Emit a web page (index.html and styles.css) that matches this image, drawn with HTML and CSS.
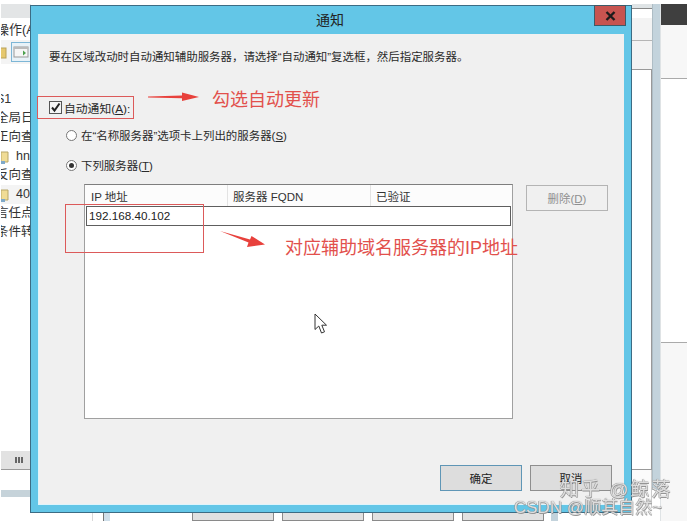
FILE: index.html
```html
<!DOCTYPE html>
<html lang="zh-CN">
<head>
<meta charset="utf-8">
<title>通知</title>
<link rel="stylesheet" href="styles.css">
</head>
<body>
<div class="desktop">
  <div class="bg-left">
    <div class="bg-band"></div>
    <div class="bg-menu">操作(A</div>
    <div class="bg-tools">
      <svg class="bg-folder-top" width="7" height="13" viewBox="0 0 7 13"><rect x="0" y="2" width="6" height="10" fill="#e6c86e" stroke="#b9a15a"/></svg>
      <svg class="bg-tool" width="20" height="20" viewBox="0 0 20 20"><rect x="0.5" y="0.5" width="19" height="19" fill="#e8f2f8" stroke="#7db6d6"/><rect x="3" y="5" width="14" height="10" fill="#f6f6f6" stroke="#999"/><rect x="3" y="5" width="14" height="2" fill="#bbb"/><path d="M12 8.500l3 2.500-3 2.500z" fill="#4da04d"/></svg>
    </div>
    <div class="bg-tree">
      <div class="bg-row bg-first">S1</div>
      <div class="bg-row">全局日</div>
      <div class="bg-row">正向查</div>
      <div class="bg-row bg-file"><svg width="8" height="14" viewBox="0 0 8 14"><path d="M0 2h7v10H0z" fill="#f0dc96" stroke="#b7a668"/><path d="M0 11h4v3H0z" fill="#7fa9c9"/></svg><span>hn</span></div>
      <div class="bg-row">反向查</div>
      <div class="bg-row bg-file bg-sel"><svg width="8" height="14" viewBox="0 0 8 14"><path d="M0 2h7v10H0z" fill="#f0dc96" stroke="#b7a668"/><path d="M0 11h4v3H0z" fill="#7fa9c9"/></svg><span>40</span></div>
      <div class="bg-row">言任点</div>
      <div class="bg-row">条件转</div>
    </div>
    <div class="bg-scroll"><span class="bg-grip"></span></div>
    <div class="bg-strip"></div>
  </div>

  <div class="bg-bottom">
    <span class="bg-divider"></span>
    <span class="bg-tab"></span>
    <span class="bg-btn"></span>
    <span class="bg-btn"></span>
    <span class="bg-btn"></span>
    <span class="bg-btn"></span>
    <span class="bg-blue"></span>
  </div>

  <div class="bg-right">
    <div class="bg-pane">
      <div class="bg-pane-top"></div>
      <div class="bg-pane-mid"></div>
      <div class="bg-pane-list"></div>
      <div class="bg-pane-foot"></div>
    </div>
    <div class="bg-sep"></div>
    <div class="bg-side">
      <div class="bg-side-dark"></div>
      <div class="bg-side-light"></div>
      <div class="bg-side-white"></div>
      <div class="bg-side-rest"></div>
    </div>
  </div>

  <div class="dialog">
    <div class="titlebar">
      <span class="title">通知</span>
      <span class="close">
        <svg width="11" height="10" viewBox="0 0 11 10"><path d="M1.500 1l8 8M9.500 1l-8 8" stroke="#1c1c1c" stroke-width="2.400" fill="none"/></svg>
      </span>
    </div>
    <div class="client">
      <p class="desc">要在区域改动时自动通知辅助服务器，请选择“自动通知”复选框，然后指定服务器。</p>
      <label class="check-row">
        <span class="checkbox"><svg width="11" height="11" viewBox="0 0 11 11"><path d="M2 5.500l2.500 3L9.500 1.500" stroke="#222" stroke-width="2" fill="none"/></svg></span>
        <span>自动通知(<u>A</u>):</span>
      </label>
      <label class="radio-row radio-first">
        <span class="radio"></span>
        <span>在“名称服务器”选项卡上列出的服务器(<u>S</u>)</span>
      </label>
      <label class="radio-row radio-second">
        <span class="radio radio-on"></span>
        <span>下列服务器(<u>T</u>)</span>
      </label>
      <div class="list-row">
        <div class="table">
          <div class="thead">
            <span class="th th-ip">IP 地址</span>
            <span class="th th-fqdn">服务器 FQDN</span>
            <span class="th th-ok">已验证</span>
          </div>
          <div class="edit-row">192.168.40.102</div>
        </div>
        <button class="btn btn-disabled" type="button">删除(<u>D</u>)</button>
      </div>
      <div class="footer">
        <button class="btn btn-default" type="button">确定</button>
        <button class="btn" type="button">取消</button>
      </div>
    </div>
  </div>

  <div class="mark mark-box1"></div>
  <div class="mark mark-box2"></div>
  <svg class="mark arrow1" width="52" height="12" viewBox="0 0 52 12"><path d="M0 5.500L34 4.500V1.500L51 6 34 10V7.200L0 6.500z" fill="#e8413c"/></svg>
  <svg class="mark arrow2" width="46" height="18" viewBox="0 0 46 18"><path d="M0 0L30 8.500 31.500 5 45 13.500 27 16 28.500 11.500z" fill="#e8413c"/></svg>
  <span class="mark note note1">勾选自动更新</span>
  <span class="mark note note2">对应辅助域名服务器的IP地址</span>
  <svg class="mark cursor" width="14" height="22" viewBox="0 0 14 22"><path d="M1 1V16.500L4.800 13 7.500 20 10.500 18.800 7.800 12.200H12.500z" fill="#fff" stroke="#333" stroke-width="1"/></svg>
  <span class="mark wm wm1">知乎 @鲸落</span>
  <span class="mark wm wm2">CSDN @顺其自然~</span>
</div>
</body>
</html>
```

FILE: styles.css
```css
* { box-sizing: border-box; }
html, body { margin: 0; padding: 0; background: #fff; }
body { width: 687px; height: 528px; overflow: hidden; font-family: "Liberation Sans", "Noto Sans CJK SC", sans-serif; font-size: 11.450px; color: #2a2a2a; }
.desktop { position: relative; width: 687px; height: 528px; filter: blur(0.4px); }

/* window behind the dialog */
.bg-left { position: absolute; left: 1px; top: 4px; width: 30px; height: 517px; display: flex; flex-direction: column; overflow: hidden; background: #fff; }
.bg-band { height: 14px; background: #e3e5e6; }
.bg-menu { height: 22px; line-height: 24px; margin-left: -5px; font-size: 13px; white-space: nowrap; color: #333; }
.bg-tools { height: 24px; background: #f4f4f4; display: flex; align-items: center; gap: 4px; }
.bg-folder-top { margin-left: -1px; flex: none; }
.bg-tool { flex: none; }
.bg-tree { height: 387px; padding-top: 26px; }
.bg-row { height: 19px; line-height: 19px; margin-left: -5px; font-size: 12.500px; white-space: nowrap; color: #333; }
.bg-first { margin-left: -5px; }
.bg-file { display: flex; align-items: center; gap: 7px; margin-left: 0; }
.bg-file svg { flex: none; }
.bg-sel { background: #f4f4f4; }
.bg-scroll { height: 19px; margin-top: 0; background: #e2e2e2; border-bottom: 1px solid #9a9a9a; display: flex; align-items: center; padding-left: 14px; }
.bg-grip { width: 8px; height: 6px; background: repeating-linear-gradient(90deg, #666 0 2px, #e2e2e2 2px 3px); }
.bg-strip { height: 7px; margin-top: 20px; background: #c6d3da; }

.bg-bottom { position: absolute; left: 31px; top: 513px; width: 560px; height: 8px; display: flex; }
.bg-divider { width: 1px; height: 8px; margin-left: 61px; background: #d8d8d8; }
.bg-tab { width: 7px; height: 8px; margin-left: 10px; border-left: 1px solid #777; background: #cfdfea; }
.bg-btn { width: 82px; height: 8px; margin-left: 8px; background: #e1e1e1; border: 1px solid #8a8a8a; border-top: 0; }
.bg-tab + .bg-btn { margin-left: 82px; }
.bg-blue { width: 7px; height: 8px; margin-left: 7px; background: #c3d3dc; }

.bg-right { position: absolute; left: 632px; top: 4px; width: 55px; height: 517px; display: flex; }
.bg-pane { width: 20px; height: 504px; display: flex; flex-direction: column; }
.bg-pane-top { height: 5px; margin-bottom: 9px; background: #dfe4e6; border-bottom: 1px solid #888; }
.bg-pane-mid { height: 51px; background: linear-gradient(#f3f3f3 0 22px, #b5b5b5 22px 23px, #f3f3f3 23px); }
.bg-pane-list { height: 401px; background: #fff; border-top: 1px solid #999; border-right: 1px solid #999; border-bottom: 1px solid #999; }
.bg-pane-foot { flex: 1; background: #fbfbfb; border-right: 1px solid #ccc; }
.bg-sep { width: 8px; height: 486px; background: #c3d3dc; border-left: 1px solid #aebdc5; }
.bg-side { flex: 1; display: flex; flex-direction: column; border-left: 1px solid #dfe3e5; }
.bg-side-dark { height: 21px; background: #3f3f3f; }
.bg-side-light { height: 54px; background: #f7f7f7; border-bottom: 1px solid #aaa; }
.bg-side-white { height: 264px; background: #fff; border-bottom: 1px solid #aaa; }
.bg-side-rest { flex: 1; background: #f7f7f7; }

/* dialog */
.dialog { position: absolute; left: 30px; top: 5px; width: 602px; height: 508px; display: flex; flex-direction: column; background: #63c6e7; border: 1px solid #3c6c84; padding: 0 7px 7px; }
.titlebar { position: relative; height: 28px; flex: none; display: flex; align-items: center; justify-content: center; }
.title { font-size: 14px; color: #222; margin: -2px 2px 0 0; }
.close { position: absolute; right: -2px; top: -1px; width: 32px; height: 21px; background: #c75450; border: 1px solid #3c5b68; display: flex; align-items: center; justify-content: center; }
.client { flex: 1; display: flex; flex-direction: column; background: #f0f0f0; border-left: 1px solid #dff4fb; border-bottom: 1px solid #dff4fb; padding: 16px 0 13px 10px; }
.desc { margin: 0; height: 14px; line-height: 14px; white-space: nowrap; }
.check-row { display: flex; align-items: center; gap: 2px; height: 14px; margin-top: 36px; font-size: 11.800px; }
.checkbox { width: 13px; height: 13px; flex: none; border: 1px solid #555; background: #f4f4f4; display: flex; align-items: center; justify-content: center; }
.radio-row { display: flex; align-items: center; gap: 4px; height: 14px; margin-left: 17px; }
.radio-first { margin-top: 14px; }
.radio-second { margin-top: 16px; }
.radio { width: 11px; height: 11px; flex: none; border: 1px solid #777; border-radius: 50%; background: #fff; display: flex; align-items: center; justify-content: center; }
.radio-on::after { content: ""; width: 5px; height: 5px; border-radius: 50%; background: #333; }
.list-row { display: flex; align-items: flex-start; gap: 13px; margin-top: 12px; margin-left: 35px; }
.table { width: 429px; height: 235px; flex: none; background: #fff; border: 1px solid #a0a0a0; border-top-color: #7e7e7e; }
.thead { display: flex; height: 21px; background: #fcfcfc; }
.th { display: flex; align-items: center; height: 21px; border-right: 1px solid #e3e3e3; padding-left: 6px; font-size: 11.500px; color: #333; white-space: nowrap; }
.th-ip { width: 143px; }
.th-fqdn { width: 143px; padding-left: 5px; }
.th-ok { flex: 1; border-right: 0; padding-left: 5px; }
.edit-row { height: 20px; margin: 0 1px; padding-left: 2px; line-height: 18px; border: 1px solid #5e5e5e; font-size: 11.700px; background: #fff; color: #222; }
.btn { width: 82px; height: 26px; flex: none; padding: 0; background: #dddddd; border: 1px solid #8e8e8e; font: inherit; color: #222; }
.btn-disabled { margin-top: 1px; background: #f0f0f0; border-color: #b4b4b4; color: #8f8f8f; }
.btn-default { border-color: #5f96b6; }
.footer { margin-top: auto; display: flex; justify-content: flex-end; gap: 8px; padding-right: 12px; }

/* annotations on top of the screenshot */
.mark { position: absolute; }
.mark-box1 { left: 37px; top: 96px; width: 97px; height: 23px; border: 1px solid #dc5a5a; }
.mark-box2 { left: 65px; top: 204px; width: 139px; height: 49px; border: 1px solid #dc5a5a; }
.arrow1 { left: 148px; top: 91px; }
.arrow2 { left: 220px; top: 231px; }
.note { color: #e2504c; font-size: 18px; line-height: 22px; white-space: nowrap; }
.note1 { left: 212px; top: 89px; }
.note2 { left: 285px; top: 237px; }
.cursor { left: 314px; top: 313px; }
.wm { color: rgba(255, 255, 255, 0.75); white-space: nowrap; text-shadow: 0 0 1px #777, 0.5px 0.5px 0 #999, -0.5px -0.5px 0 #999; }
.wm1 { left: 560px; top: 479px; font-size: 19px; line-height: 22px; letter-spacing: 2px; }
.wm2 { left: 514px; top: 497px; font-size: 17px; line-height: 22px; }
```
